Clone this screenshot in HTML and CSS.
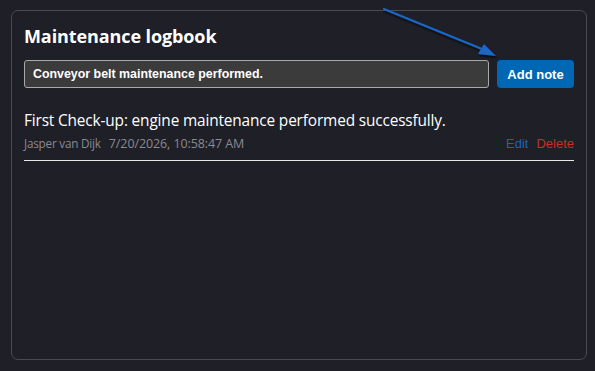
FILE: index.html
```html
<!DOCTYPE html>
<html>
<head>
<meta charset="utf-8">
<link rel="stylesheet" href="styles.css">
</head>
<body>
<div class="card">
  <h1 class="title">Maintenance logbook</h1>
  <div class="form">
    <input class="note-input" type="text" value="Conveyor belt maintenance performed.">
    <button class="add-btn">Add note</button>
  </div>
  <div class="entry">
    <div class="entry-text">First Check-up: engine maintenance performed successfully.</div>
    <div class="entry-meta">
      <span class="author">Jasper van Dijk</span>
      <span class="date">7/20/2026, 10:58:47 AM</span>
      <span class="actions"><span class="edit">Edit</span><span class="delete">Delete</span></span>
    </div>
  </div>
</div>
<svg class="arrow" width="130" height="70" viewBox="0 0 130 70">
  <defs>
    <filter id="sh" x="-20%" y="-20%" width="140%" height="140%">
      <feDropShadow dx="1" dy="2" stdDeviation="1.2" flood-color="#000" flood-opacity="0.7"/>
    </filter>
  </defs>
  <g filter="url(#sh)">
    <line x1="14" y1="9" x2="112" y2="49" stroke="#1a66c4" stroke-width="2.2" stroke-linecap="round"/>
    <polygon points="126,56 108,54 114,44" fill="#1a66c4"/>
  </g>
</svg>
</body>
</html>
```
FILE: styles.css
```css
html, body {
  margin: 0;
  padding: 0;
  background: #1e1f27;
}
body {
  padding: 10px 8px 11px 11px;
  height: 371px;
  box-sizing: border-box;
  position: relative;
}
.card {
  height: 350px;
  box-sizing: border-box;
  border: 1px solid #4a4b52;
  border-radius: 7px;
  padding: 13px 12px 0 12px;
  background: #1e1f27;
}
.title {
  margin: 0;
  font-family: "Open Sans", sans-serif;
  font-weight: 700;
  font-size: 18px;
  line-height: 25px;
  color: #ffffff;
  letter-spacing: -0.1px;
}
.form {
  display: flex;
  gap: 8px;
  margin-top: 11px;
}
.note-input {
  flex: 1;
  height: 28px;
  box-sizing: border-box;
  background: #3b3b3b;
  border: 1px solid #a9a9a9;
  border-radius: 3px;
  color: #ffffff;
  font-family: "Liberation Sans", Arial, sans-serif;
  font-weight: 700;
  font-size: 12.4px;
  padding: 0 8px;
  outline: none;
}
.add-btn {
  width: 77px;
  height: 28px;
  border: none;
  border-radius: 4px;
  background: #0067b5;
  color: #ffffff;
  font-family: "Liberation Sans", Arial, sans-serif;
  font-weight: 700;
  font-size: 13px;
  padding: 0;
}
.entry {
  margin-top: 22px;
  border-bottom: 1px solid #e8e8e8;
  padding-bottom: 8px;
}
.entry-text {
  font-family: "Open Sans", sans-serif;
  font-size: 15.4px;
  line-height: 21px;
  color: #ffffff;
  letter-spacing: -0.15px;
}
.entry-meta {
  display: flex;
  align-items: baseline;
  margin-top: 4px;
  color: #8a8a8f;
  font-family: "Open Sans", sans-serif;
  font-size: 12.5px;
  line-height: 17px;
}
.author {
  font-size: 11.7px;
  letter-spacing: -0.2px;
}
.date {
  margin-left: 8px;
  letter-spacing: -0.1px;
}
.actions {
  margin-left: auto;
  display: flex;
  gap: 8px;
  font-family: "Liberation Sans", Arial, sans-serif;
  font-size: 13px;
}
.edit { color: #1565c0; }
.delete { color: #c62f2a; }
.arrow {
  position: absolute;
  left: 370px;
  top: 0;
}
```
